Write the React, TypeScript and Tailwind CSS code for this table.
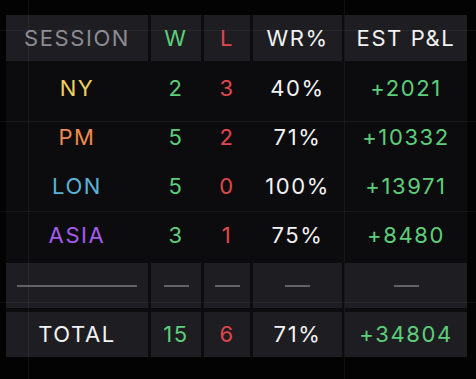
import React from 'react';

type Row = {
  session: string;
  color: string;
  w: number;
  l: number;
  wr: string;
  pnl: string;
};

const rows: Row[] = [
  { session: 'NY', color: 'text-[#f0d060]', w: 2, l: 3, wr: '40%', pnl: '+2021' },
  { session: 'PM', color: 'text-[#ee8a4c]', w: 5, l: 2, wr: '71%', pnl: '+10332' },
  { session: 'LON', color: 'text-[#5ab2d6]', w: 5, l: 0, wr: '100%', pnl: '+13971' },
  { session: 'ASIA', color: 'text-[#a45cec]', w: 3, l: 1, wr: '75%', pnl: '+8480' },
];

const cols = 'grid grid-cols-[142px_50px_46px_89px_122px] gap-x-[3px]';
const cell = 'flex items-center justify-center';

const App = () => {
  return (
    <div
      className="relative h-[379px] w-[476px] overflow-hidden bg-[#030304] pl-[6px] pt-[15px] text-[22px] font-normal tracking-[1.6px]"
      style={{ fontFamily: 'Inter, "Liberation Sans", sans-serif' }}
    >
      {/* Table */}
      <div className="flex w-[461px] flex-col gap-y-[3px] bg-[#0c0c0e]">
        {/* Header */}
        <div className={`${cols} h-[46px]`}>
          <div className={`${cell} bg-[#1e1e22] text-[#8b8b93]`}>SESSION</div>
          <div className={`${cell} bg-[#1e1e22] text-[#5ccf7a]`}>W</div>
          <div className={`${cell} bg-[#1e1e22] text-[#e0474c]`}>L</div>
          <div className={`${cell} bg-[#1e1e22] text-[#f2f2f2]`}>WR%</div>
          <div className={`${cell} bg-[#1e1e22] text-[#f2f2f2]`}>EST P&amp;L</div>
        </div>

        {/* Body */}
        <div className="flex flex-col">
          {rows.map((r) => (
            <div key={r.session} className={`${cols} h-[49px]`}>
              <div className={`${cell} ${r.color}`}>{r.session}</div>
              <div className={`${cell} text-[#5ccf7a]`}>{r.w}</div>
              <div className={`${cell} text-[#e0474c]`}>{r.l}</div>
              <div className={`${cell} text-[#f2f2f2]`}>{r.wr}</div>
              <div className={`${cell} text-[#5ccf7a]`}>{r.pnl}</div>
            </div>
          ))}
        </div>

        {/* Separator */}
        <div className={`${cols} h-[45px]`}>
          <div className={`${cell} bg-[#1e1e22]`}>
            <div className="h-[2px] w-[120px] bg-[#626268]" />
          </div>
          <div className={`${cell} bg-[#1e1e22]`}>
            <div className="h-[2px] w-[25px] bg-[#626268]" />
          </div>
          <div className={`${cell} bg-[#1e1e22]`}>
            <div className="h-[2px] w-[25px] bg-[#626268]" />
          </div>
          <div className={`${cell} bg-[#1e1e22]`}>
            <div className="h-[2px] w-[25px] bg-[#626268]" />
          </div>
          <div className={`${cell} bg-[#1e1e22]`}>
            <div className="h-[2px] w-[25px] bg-[#626268]" />
          </div>
        </div>

        {/* Total */}
        <div className={`${cols} mt-[1px] h-[45px]`}>
          <div className={`${cell} bg-[#1e1e22] text-[#f2f2f2]`}>TOTAL</div>
          <div className={`${cell} bg-[#1e1e22] text-[#5ccf7a]`}>15</div>
          <div className={`${cell} bg-[#1e1e22] text-[#e0474c]`}>6</div>
          <div className={`${cell} bg-[#1e1e22] text-[#f2f2f2]`}>71%</div>
          <div className={`${cell} bg-[#1e1e22] text-[#5ccf7a]`}>+34804</div>
        </div>
      </div>

      {/* Chart grid lines over the panel */}
      <div className="pointer-events-none absolute inset-0">
        <div className="absolute left-[28px] top-0 h-full w-px bg-white/[0.05]" />
        <div className="absolute left-[344px] top-0 h-full w-px bg-white/[0.05]" />
        <div className="absolute left-0 top-[30px] h-px w-full bg-white/[0.05]" />
        <div className="absolute left-0 top-[121px] h-px w-full bg-white/[0.05]" />
        <div className="absolute left-0 top-[211px] h-px w-full bg-white/[0.05]" />
        <div className="absolute left-0 top-[302px] h-px w-full bg-white/[0.05]" />
      </div>
    </div>
  );
};

export default App;
